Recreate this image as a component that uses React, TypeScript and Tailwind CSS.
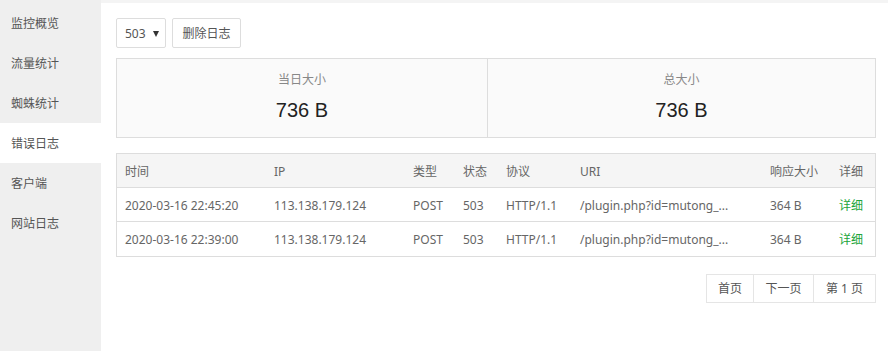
import React from "react";

const font = { fontFamily: '"Noto Sans", "Noto Sans CJK SC", sans-serif' };

const navItems = ["监控概览", "流量统计", "蜘蛛统计", "错误日志", "客户端", "网站日志"];

const rows = [
  { time: "2020-03-16 22:45:20" },
  { time: "2020-03-16 22:39:00" },
];

export default function App() {
  return (
    <div className="flex w-[888px] h-[351px] bg-white text-[12px] text-[#666]" style={font}>
      <div className="w-[101px] h-full bg-[#efefef] pt-[3px] flex flex-col">
        {navItems.map((n, i) => (
          <div
            key={n}
            className={`h-[40px] flex items-center pl-[11px] pt-[2px] text-[12px] text-[#555] ${i === 3 ? "bg-white" : ""}`}
          >
            {n}
          </div>
        ))}
      </div>
      <div className="flex-1 flex flex-col">
        <div className="h-[3px] bg-[#f4f4f4]" />
        <div className="pl-[15px] pr-[12px] pt-[15px]">
          <div className="flex gap-[6px]">
            <div className="w-[50px] h-[30px] border border-[#ddd] rounded-[2px] flex items-center pl-[8px] pt-[1px] text-[#555] text-[12px]">
              503
              <span className="ml-[7px] w-0 h-0 border-l-[3px] border-r-[3px] border-t-[6px] border-l-transparent border-r-transparent border-t-[#333]" />
            </div>
            <div className="w-[69px] h-[30px] border border-[#ddd] rounded-[2px] flex items-center justify-center pt-[1px] text-[#555] text-[12px]">
              删除日志
            </div>
          </div>
          <div className="mt-[10px] h-[80px] border border-[#ddd] bg-[#fafafa] flex">
            <div className="w-[371px] flex flex-col items-center border-r border-[#ddd]">
              <div className="mt-[12px] text-[12px] text-[#888]">当日大小</div>
              <div className="mt-[6px] text-[20px] text-[#222]" style={{ fontFamily: '"Liberation Sans", Arial, sans-serif' }}>736 B</div>
            </div>
            <div className="flex-1 flex flex-col items-center">
              <div className="mt-[12px] text-[12px] text-[#888]">总大小</div>
              <div className="mt-[6px] text-[20px] text-[#222]" style={{ fontFamily: '"Liberation Sans", Arial, sans-serif' }}>736 B</div>
            </div>
          </div>
          <div className="mt-[15px] border border-[#ddd]">
            <div className="h-[34px] pt-[2px] bg-[#f5f5f5] flex items-center border-b border-[#ddd]">
              <div className="w-[149px] pl-[8px]">时间</div>
              <div className="w-[139px] pl-[8px]">IP</div>
              <div className="w-[50px] pl-[8px]">类型</div>
              <div className="w-[43px] pl-[8px]">状态</div>
              <div className="w-[74px] pl-[8px]">协议</div>
              <div className="w-[190px] pl-[8px]">URI</div>
              <div className="w-[69px] pl-[8px]">响应大小</div>
              <div className="flex-1 pl-[8px]">详细</div>
            </div>
            {rows.map((r, i) => (
              <div key={r.time} className={`h-[34px] pt-[2px] flex items-center ${i === 0 ? "border-b border-[#ddd]" : ""}`}>
                <div className="w-[149px] pl-[8px]">{r.time}</div>
                <div className="w-[139px] pl-[8px]">113.138.179.124</div>
                <div className="w-[50px] pl-[8px]">POST</div>
                <div className="w-[43px] pl-[8px]">503</div>
                <div className="w-[74px] pl-[8px]">HTTP/1.1</div>
                <div className="w-[190px] pl-[8px]">/plugin.php?id=mutong_...</div>
                <div className="w-[69px] pl-[8px]">364 B</div>
                <div className="flex-1 pl-[8px] text-[#20a53a]">详细</div>
              </div>
            ))}
          </div>
          <div className="mt-[17px] flex justify-end">
            <div className="flex border border-[#e5e5e5] h-[29px] text-[#555] text-[12px]">
              <div className="w-[47px] flex items-center justify-center border-r border-[#e5e5e5]">首页</div>
              <div className="w-[60px] flex items-center justify-center border-r border-[#e5e5e5]">下一页</div>
              <div className="w-[61px] flex items-center justify-center">第 1 页</div>
            </div>
          </div>
        </div>
      </div>
    </div>
  );
}
